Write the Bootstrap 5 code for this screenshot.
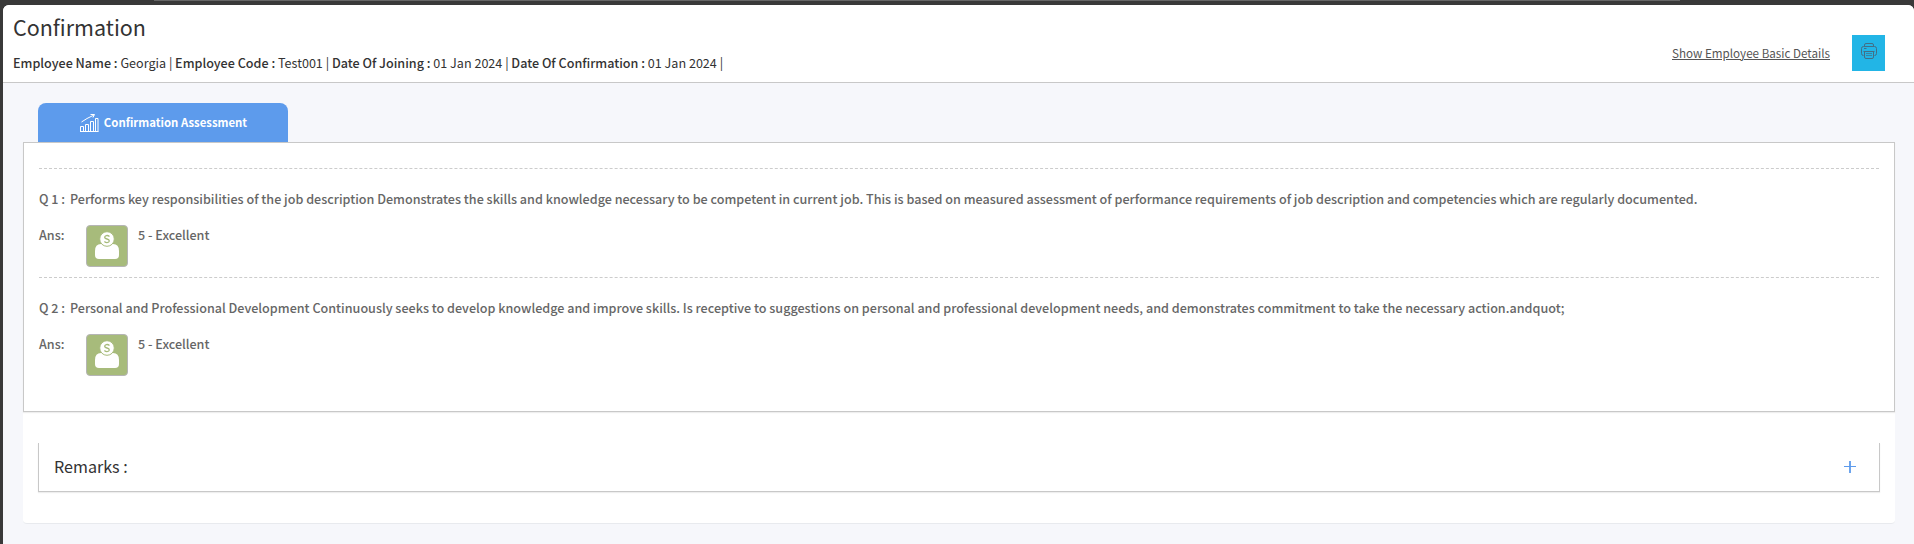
<!DOCTYPE html>
<html lang="en">
<head>
<meta charset="utf-8">
<meta name="viewport" content="width=device-width, initial-scale=1">
<title>Confirmation</title>
<link href="https://cdn.jsdelivr.net/npm/bootstrap@5.3.0/dist/css/bootstrap.min.css" rel="stylesheet">
<style>
body{background:#393939;font-family:"Noto Sans CJK SC","Noto Sans",sans-serif;font-size:13px;color:#333;height:544px;overflow:hidden}
.top-strip{height:1px;margin:0 234px 0 154px;background:#666}
.sheet{margin:4px 0 0 3px;height:539px;background:#f6f7fb;border-radius:6px 6px 0 0;overflow:hidden}
.sheet-head{height:78px;background:#fff;border-bottom:1px solid #c8c8c8;padding:0 29px 0 10px}
.sheet-title{font-size:21.5px;font-weight:400;line-height:30px;margin:7px 0 0;color:#333}
.meta{line-height:20px;margin-top:11px;white-space:nowrap;font-size:12.58px}
.meta b,.q-line,.a-line{font-weight:500}
.head-actions{padding-top:30px}
.details-link{font-size:11.65px;color:#555;margin-right:22px;line-height:20px}
.details-link:hover{color:#333}
.print-btn{width:33px;height:36px;background:#22b5e6;border-radius:0;padding:0 0 5px}
.tab-head{width:250px;height:39px;margin:20px 0 0 35px;background:#5d9bec;border-radius:8px 8px 0 0;color:#fff;font-weight:700;font-size:11.36px}
.tab-head svg{margin-right:5px}
.content-card{margin:0 19px 0 20px;height:382px;background:#fff;border-radius:0 0 4px 4px;border-bottom:1px solid #e8eaee}
.panel{height:270px;border:1px solid #c8c8c8;box-shadow:0 1px 1px #eee;padding:25px 15px 0;color:#666;font-size:12.592px}
.qa{height:109px;border-top:1px dashed #ccc;white-space:nowrap}
.q-line{line-height:20px;padding-top:20px}
.q-num{width:31px}
.a-line{padding-top:16px;line-height:20px}
.a-label{width:47px}
.rating{width:42px;height:42px;margin-right:10px;background:#a7bb7b;border:1px solid #b5b5b5;border-radius:4px}
.remarks{height:49px;margin:31px 15px 0;border:1px solid #c8c8c8;border-top:0;box-shadow:0 1px 1px #eee;padding:0 23px 1px 15px;font-size:16.11px}
</style>
</head>
<body>
<div class="top-strip"></div>
<main class="sheet">
  <header class="sheet-head d-flex justify-content-between align-items-start">
    <div>
      <h1 class="sheet-title">Confirmation</h1>
      <div class="meta"><b>Employee Name :</b> Georgia | <b>Employee Code :</b> Test001 | <b>Date Of Joining :</b> 01 Jan 2024 | <b>Date Of Confirmation :</b> 01 Jan 2024 |</div>
    </div>
    <div class="head-actions d-flex align-items-center">
      <a href="#" class="details-link">Show Employee Basic Details</a>
      <button class="btn print-btn border-0 d-flex align-items-center justify-content-center" aria-label="Print">
        <svg width="16" height="16" viewBox="0 0 16 16" fill="none" stroke="#436f86"><path d="M3.500 3.500V2Q3.500 .5 5 .5H11Q12.500 .5 12.500 2V3.500M2.500 12.500Q.5 12.500 .5 10.500V5.500Q.5 3.500 2.500 3.500H13.500Q15.500 3.500 15.500 5.500V10.500Q15.500 12.500 13.500 12.500M2.500 8.500H13.500M3.500 8.500V14Q3.500 15.500 5 15.500H11Q12.500 15.500 12.500 14V8.500M3 5.500H5.500"/><path d="M5 10.500H11M5 12.500H11" stroke-opacity=".7"/></svg>
      </button>
    </div>
  </header>
  <div class="tab-head d-flex align-items-center justify-content-center">
    <svg width="20" height="20" viewBox="0 0 20 20" fill="none" stroke="#fff"><path d="M1.500 18.500V13.500H4.500V18.500ZM6.500 18.500V11.500H9.500V18.500ZM11.500 18.500V8.500H14.500V18.500ZM16.500 18.500V5.500H19V18.500ZM2.500 9L8 5.500L15 2M11.500 1.500H15.500L14 4.500M1 18.500H19.500"/></svg>
    <span>Confirmation Assessment</span>
  </div>
  <section class="content-card">
    <div class="panel">
      <div class="qa">
        <div class="q-line d-flex"><span class="q-num">Q 1 :</span><span>Performs key responsibilities of the job description Demonstrates the skills and knowledge necessary to be competent in current job. This is based on measured assessment of performance requirements of job description and competencies which are regularly documented.</span></div>
        <div class="a-line d-flex"><span class="a-label">Ans:</span><span class="rating"><svg class="d-block" width="40" height="40" viewBox="0 0 40 40"><path d="M8 29V25Q8 18 14 18H26Q32 18 32 25V29Q32 33 28 33H12Q8 33 8 29Z" fill="#fff"/><circle cx="20" cy="13" r="7.300" fill="#fff" stroke="#a7bb7b"/><path d="M22.500 10.500Q21 9.200 19.300 9.600Q17.500 10 17.700 11.500Q18 12.600 20 13Q22.300 13.600 22.300 15Q22.200 16.500 20 16.600Q18.500 16.600 17.400 15.500" fill="none" stroke="#a7bb7b" stroke-width="1.300"/></svg></span><span>5 - Excellent</span></div>
      </div>
      <div class="qa">
        <div class="q-line d-flex"><span class="q-num">Q 2 :</span><span>Personal and Professional Development Continuously seeks to develop knowledge and improve skills. Is receptive to suggestions on personal and professional development needs, and demonstrates commitment to take the necessary action.andquot;</span></div>
        <div class="a-line d-flex"><span class="a-label">Ans:</span><span class="rating"><svg class="d-block" width="40" height="40" viewBox="0 0 40 40"><path d="M8 29V25Q8 18 14 18H26Q32 18 32 25V29Q32 33 28 33H12Q8 33 8 29Z" fill="#fff"/><circle cx="20" cy="13" r="7.300" fill="#fff" stroke="#a7bb7b"/><path d="M22.500 10.500Q21 9.200 19.300 9.600Q17.500 10 17.700 11.500Q18 12.600 20 13Q22.300 13.600 22.300 15Q22.200 16.500 20 16.600Q18.500 16.600 17.400 15.500" fill="none" stroke="#a7bb7b" stroke-width="1.300"/></svg></span><span>5 - Excellent</span></div>
      </div>
    </div>
    <div class="remarks d-flex align-items-center justify-content-between">
      <span>Remarks :</span>
      <svg width="12" height="12" viewBox="0 0 12 12" stroke="#5d9bec"><path d="M0 5.500H12"/><path d="M6 0V12" stroke-width="2" opacity=".9"/></svg>
    </div>
  </section>
</main>
<script src="https://cdn.jsdelivr.net/npm/bootstrap@5.3.0/dist/js/bootstrap.bundle.min.js"></script>
</body>
</html>
